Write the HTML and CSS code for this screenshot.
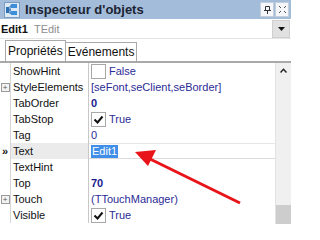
FILE: index.html
```html
<!DOCTYPE html>
<html>
<head>
<meta charset="utf-8">
<link rel="stylesheet" href="styles.css">
</head>
<body>
<div class="win">
  <div class="title">
    <svg class="ticon" width="16" height="16" viewBox="0 0 16 16">
      <rect x="0.5" y="0.5" width="15" height="15" fill="#dbe8f6" stroke="#7d9cc0"/>
      <rect x="7" y="2" width="6" height="4" fill="#3d8fd9"/>
      <rect x="7" y="9" width="6" height="4" fill="#3d8fd9"/>
      <rect x="2" y="5" width="3" height="6" fill="#2b6fb5"/>
      <path d="M5 8H7M6 4V12M6 4H7M6 11H7" stroke="#2b6fb5" fill="none"/>
    </svg>
    <span class="ttext">Inspecteur d'objets</span>
    <span class="tbtn"><svg width="9" height="9" viewBox="0 0 9 9"><path d="M2.5 1.5h4v4h-4zM1 5.5h7M4.5 5.5V9" stroke="#333" fill="none"/></svg></span>
    <span class="tbtn"><svg width="9" height="9" viewBox="0 0 9 9"><path d="M1 1l2 2M8 1L6 3M1 8l2-2M8 8L6 6" stroke="#555" fill="none"/></svg></span>
  </div>
  <div class="combo">
    <span class="cname">Edit1</span><span class="ctype">TEdit</span>
    <span class="cbtn"><svg width="7" height="4" viewBox="0 0 7 4"><path d="M0 0h7L3.5 4z" fill="#111"/></svg></span>
  </div>
  <div class="tabs">
    <span class="tab active">Propriétés</span><span class="tab">Evénements</span>
  </div>
  <div class="body">
    <div class="grid">
      <div class="row"><span class="gut"></span><span class="name">ShowHint</span><span class="val"><span class="chk"></span>False</span></div>
      <div class="row"><span class="gut"><span class="exp">+</span></span><span class="name">StyleElements</span><span class="val">[seFont,seClient,seBorder]</span></div>
      <div class="row"><span class="gut"></span><span class="name">TabOrder</span><span class="val bold">0</span></div>
      <div class="row"><span class="gut"></span><span class="name">TabStop</span><span class="val"><span class="chk on"><svg width="11" height="9" viewBox="0 0 11 9"><path d="M1.5 4.5l3 3 5-6" stroke="#111" stroke-width="2" fill="none"/></svg></span>True</span></div>
      <div class="row"><span class="gut"></span><span class="name">Tag</span><span class="val">0</span></div>
      <div class="row cur"><span class="gut">»</span><span class="name">Text</span><span class="val edit"><span class="sel">Edit1</span></span></div>
      <div class="row"><span class="gut"></span><span class="name">TextHint</span><span class="val"></span></div>
      <div class="row"><span class="gut"></span><span class="name">Top</span><span class="val bold">70</span></div>
      <div class="row"><span class="gut"><span class="exp">+</span></span><span class="name">Touch</span><span class="val">(TTouchManager)</span></div>
      <div class="row"><span class="gut"></span><span class="name">Visible</span><span class="val"><span class="chk on"><svg width="11" height="9" viewBox="0 0 11 9"><path d="M1.5 4.5l3 3 5-6" stroke="#111" stroke-width="2" fill="none"/></svg></span>True</span></div>
    </div>
    <div class="sbar">
      <svg class="up" width="7" height="5" viewBox="0 0 7 5"><path d="M0.5 4.5L3.5 1.2L6.5 4.5" stroke="#222" stroke-width="1.4" fill="none"/></svg>
      <span class="thumb"></span>
    </div>
  </div>
  <svg class="arrow" width="291" height="224" viewBox="0 0 291 224">
    <line x1="240" y1="203" x2="148" y2="158" stroke="#e8141a" stroke-width="3"/>
    <path d="M135 152L156 150L148 166Z" fill="#e8141a"/>
  </svg>
</div>
</body>
</html>
```
FILE: styles.css
```css
html, body { margin: 0; padding: 0; background: #fff; }
body { width: 291px; height: 224px; overflow: hidden; font-family: "Liberation Sans", Arial, sans-serif; font-size: 11px; color: #111; }
.win { position: relative; width: 291px; height: 224px; display: flex; flex-direction: column; }
.title { height: 19px; background: #a3bcd9; display: flex; align-items: center; padding: 0 2px 0 4px; }
.ticon { margin-right: 5px; }
.ttext { flex: 1; font-weight: bold; font-size: 13px; color: #1b2433; }
.tbtn { width: 12px; height: 13px; background: #f4f6f9; border: 1px solid #c4cfdc; display: flex; align-items: center; justify-content: center; margin-left: 1px; }
.combo { height: 19px; display: flex; align-items: center; padding-left: 1px; border-bottom: 1px solid #e4e4e4; }
.cname { font-weight: bold; margin-right: 6px; }
.ctype { color: #8e8e8e; flex: 1; }
.cbtn { width: 16px; height: 16px; background: #e1e1e1; border: 1px solid #d0d0d0; display: flex; align-items: center; justify-content: center; margin-right: 1px; }
.tabs { height: 22px; display: flex; align-items: flex-end; padding-left: 5px; border-bottom: 2px solid #a9a9a9; }
.tab { height: 18px; line-height: 18px; padding: 0 2px 0 2px; font-size: 12px; border: 1px solid #a9a9a9; border-bottom: none; background: #fff; color: #111; }
.tab.active { height: 20px; line-height: 21px; }
.tab + .tab { border-left: none; }
.body { flex: 1; display: flex; overflow: hidden; }
.grid { flex: 1; display: flex; flex-direction: column; border-right: 1px solid #e2e2e2; }
.row { height: 16px; display: flex; align-items: center; flex-shrink: 0; }
.gut { width: 10px; height: 16px; border-right: 1px solid #d6d6d6; display: flex; align-items: center; justify-content: center; font-size: 11px; font-weight: bold; line-height: 16px; }
.exp { width: 7px; height: 7px; border: 1px solid #9a9a9a; font-size: 8px; line-height: 7px; text-align: center; color: #555; font-weight: normal; background: #f2f2f2; }
.name { width: 75px; height: 16px; line-height: 16px; padding-left: 2px; border-right: 1px solid #c8c8c8; }
.row.cur .name { background: #ebebeb; }
.val { flex: 1; height: 16px; display: flex; align-items: center; padding-left: 2px; color: #2b2b96; white-space: nowrap; overflow: hidden; }
.val.bold { font-weight: bold; color: #1a1a8c; }
.val.edit { border-top: 1px solid #e6e6e6; border-bottom: 1px solid #dadada; height: 14px; }
.sel { background: #3f8ee8; color: #fff; padding: 0 1px; line-height: 13px; font-weight: normal; }
.chk { width: 13px; height: 13px; border: 1px solid #a8a8a8; background: #fff; margin-right: 3px; display: flex; align-items: center; justify-content: center; }
.sbar { width: 15px; background: #f0f0f0; display: flex; flex-direction: column; align-items: center; justify-content: space-between; }
.up { margin-top: 5px; }
.thumb { width: 15px; height: 19px; background: #cdcdcd; }
.arrow { position: absolute; left: 0; top: 0; pointer-events: none; }
```
